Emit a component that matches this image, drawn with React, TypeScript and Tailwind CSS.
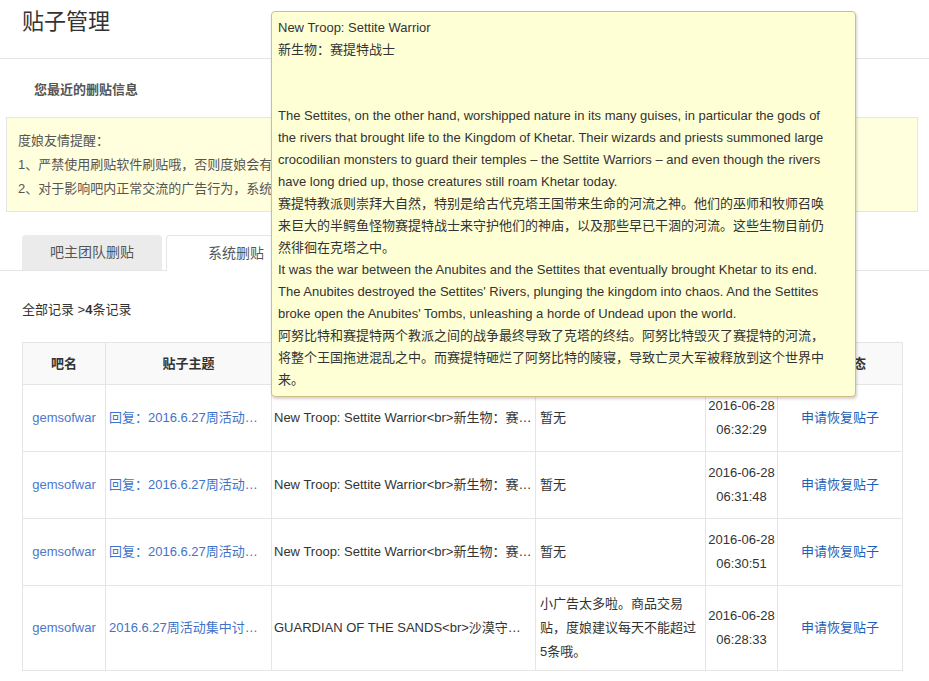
import React from 'react';

const tipLines = [
    'New Troop: Settite Warrior',
    '新生物：赛提特战士',
    '',
    '',
    'The Settites, on the other hand, worshipped nature in its many guises, in particular the gods of',
    'the rivers that brought life to the Kingdom of Khetar. Their wizards and priests summoned large',
    'crocodilian monsters to guard their temples – the Settite Warriors – and even though the rivers',
    'have long dried up, those creatures still roam Khetar today.',
    '赛提特教派则崇拜大自然，特别是给古代克塔王国带来生命的河流之神。他们的巫师和牧师召唤',
    '来巨大的半鳄鱼怪物赛提特战士来守护他们的神庙，以及那些早已干涸的河流。这些生物目前仍',
    '然徘徊在克塔之中。',
    'It was the war between the Anubites and the Settites that eventually brought Khetar to its end.',
    "The Anubites destroyed the Settites' Rivers, plunging the kingdom into chaos. And the Settites",
    "broke open the Anubites' Tombs, unleashing a horde of Undead upon the world.",
    '阿努比特和赛提特两个教派之间的战争最终导致了克塔的终结。阿努比特毁灭了赛提特的河流，',
    '将整个王国拖进混乱之中。而赛提特砸烂了阿努比特的陵寝，导致亡灵大军被释放到这个世界中',
    '来。',
];

const rows = [
    { topic: '回复：2016.6.27周活动集中讨论贴', content: 'New Troop: Settite Warrior<br>新生物：赛提特战士', reason: '暂无', time: '06:32:29' },
    { topic: '回复：2016.6.27周活动集中讨论贴', content: 'New Troop: Settite Warrior<br>新生物：赛提特战士', reason: '暂无', time: '06:31:48' },
    { topic: '回复：2016.6.27周活动集中讨论贴', content: 'New Troop: Settite Warrior<br>新生物：赛提特战士', reason: '暂无', time: '06:30:51' },
    { topic: '2016.6.27周活动集中讨论贴', content: 'GUARDIAN OF THE SANDS<br>沙漠守卫者', reason: '小广告太多啦。商品交易贴，度娘建议每天不能超过5条哦。', time: '06:28:33' },
];

const App: React.FC = () => {
    return (
        <div className="relative w-[929px] min-h-[681px] bg-white text-[13px] text-[#333] font-['Liberation_Sans','Noto_Sans_CJK_SC',sans-serif]">
            {/* Header */}
            <div className="h-[59px] border-b border-[#e5e5e5] pl-[22px] pt-[8px]">
                <h1 className="text-[22px] leading-[28px] text-[#333]">贴子管理</h1>
            </div>

            <div className="mt-[21px] pl-[34px] font-bold leading-[20px] text-[#555]">您最近的删贴信息</div>

            {/* Notice */}
            <div className="ml-[6px] mt-[17px] w-[912px] border border-[#e5e5e5] bg-[#fffedd] px-[11px] pt-[11px] pb-[10px] leading-[24px] text-[#555]">
                <div>度娘友情提醒：</div>
                <div>1、严禁使用刷贴软件刷贴哦，否则度娘会有相应的惩罚措施哦。</div>
                <div>2、对于影响吧内正常交流的广告行为，系统会自动进行删除处理哦。</div>
            </div>

            {/* Tabs */}
            <div className="mt-[23px] flex items-end border-b border-[#e5e5e5] pl-[22px]">
                <div className="flex h-[35px] w-[140px] items-center justify-center rounded-t-[4px] bg-[#ebebeb] text-[14px] text-[#555]">
                    吧主团队删贴
                </div>
                <div className="-mb-px ml-[4px] flex h-[36px] w-[140px] items-center justify-center rounded-t-[4px] border border-b-0 border-[#e5e5e5] bg-white text-[14px] text-[#555]">
                    系统删贴
                </div>
            </div>

            <div className="mt-[29px] pl-[22px] leading-[20px]">
                全部记录 &gt;<b>4</b>条记录
            </div>

            {/* Table */}
            <table className="ml-[22px] mt-[22px] w-[880px] table-fixed border-collapse">
                <colgroup>
                    <col className="w-[83px]" />
                    <col className="w-[166px]" />
                    <col className="w-[264px]" />
                    <col className="w-[170px]" />
                    <col className="w-[72px]" />
                    <col className="w-[125px]" />
                </colgroup>
                <thead>
                    <tr className="h-[42px] bg-[#f9f9f9]">
                        <th className="border border-[#e5e5e5] text-center font-bold">吧名</th>
                        <th className="border border-[#e5e5e5] text-center font-bold">贴子主题</th>
                        <th className="border border-[#e5e5e5] text-center font-bold">贴子内容</th>
                        <th className="border border-[#e5e5e5] text-center font-bold">删除原因</th>
                        <th className="border border-[#e5e5e5] text-center font-bold">删除时间</th>
                        <th className="border border-[#e5e5e5] text-center font-bold">恢复状态</th>
                    </tr>
                </thead>
                <tbody>
                    {rows.map((r, i) => (
                        <tr key={i} className="h-[67px] leading-[24px]">
                            <td className="border border-[#e5e5e5] text-center text-[#4a78cc]">gemsofwar</td>
                            <td className="truncate border border-[#e5e5e5] px-[3px] text-[#3f73c9]">{r.topic}</td>
                            <td className="truncate border border-[#e5e5e5] px-[2px]">{r.content}</td>
                            <td className="border border-[#e5e5e5] px-[4px] py-[6px]">{r.reason}</td>
                            <td className="border border-[#e5e5e5] px-0 text-center">
                                <div>2016-06-28</div>
                                <div>{r.time}</div>
                            </td>
                            <td className="border border-[#e5e5e5] text-center text-[#1f5fb5]">申请恢复贴子</td>
                        </tr>
                    ))}
                </tbody>
            </table>

            {/* Tooltip */}
            <div className="absolute left-[271px] top-[11px] w-[585px] rounded-[4px] border border-[#d5bc86] bg-[#ffffd6] px-[6px] py-[5px] leading-[22px] text-[#333] shadow-[1px_2px_3px_rgba(0,0,0,0.18)]">
                {tipLines.map((line, i) => (
                    <div key={i} className="h-[22px] whitespace-nowrap">
                        {line || '\u00a0'}
                    </div>
                ))}
            </div>
        </div>
    );
};

export default App;
